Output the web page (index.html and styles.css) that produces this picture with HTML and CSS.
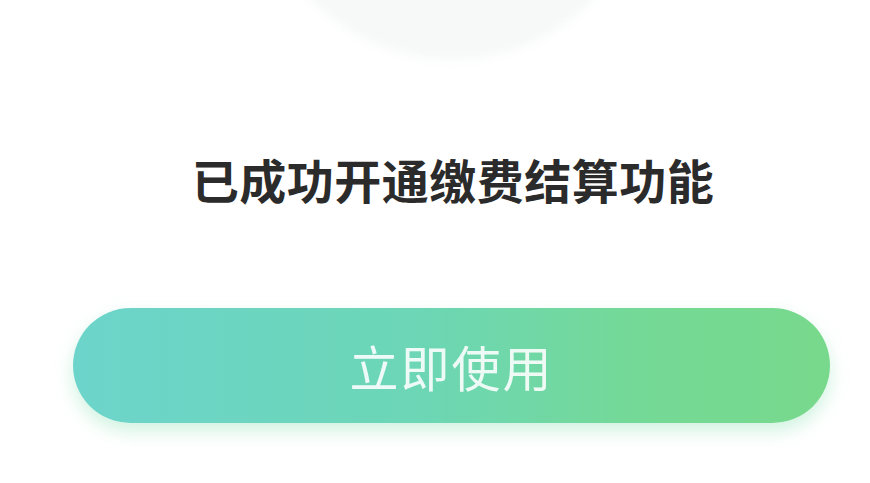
FILE: index.html
```html
<!DOCTYPE html>
<html lang="zh-CN">
<head>
<meta charset="utf-8">
<link rel="stylesheet" href="styles.css">
</head>
<body>
<div class="page">
  <div class="hero"></div>
  <h1 class="title">已成功开通缴费结算功能</h1>
  <button class="action">立即使用</button>
</div>
</body>
</html>
```
FILE: styles.css
```css
html, body {
  margin: 0;
  padding: 0;
  background: #ffffff;
  overflow: hidden;
}
.page {
  width: 870px;
  height: 483px;
  display: flex;
  flex-direction: column;
  align-items: center;
  font-family: "Noto Sans CJK SC", "Noto Sans", sans-serif;
}
.hero {
  width: 394px;
  height: 394px;
  margin-top: -334px;
  margin-left: 34px;
  border-radius: 50%;
  background: #f7f9f8;
  filter: blur(5px);
  flex-shrink: 0;
}
.title {
  margin: 94px 0 0 0;
  font-size: 47px;
  line-height: 50px;
  font-weight: 700;
  color: #2b2b2b;
  letter-spacing: 0.5px;
  margin-left: 36px;
}
.action {
  margin-top: 104px;
  margin-left: 33px;
  width: 757px;
  height: 115px;
  border: none;
  border-radius: 58px;
  background: linear-gradient(90deg, #6dd4cb 0%, #6cd6b6 45%, #74d996 75%, #78d98c 100%);
  box-shadow: 0 8px 18px rgba(120, 220, 170, 0.35);
  color: rgba(255, 255, 255, 0.88);
  font-family: "Noto Sans CJK SC", "Noto Sans", sans-serif;
  font-size: 49px;
  font-weight: 400;
  letter-spacing: 2px;
  padding: 0;
  flex-shrink: 0;
}
```
